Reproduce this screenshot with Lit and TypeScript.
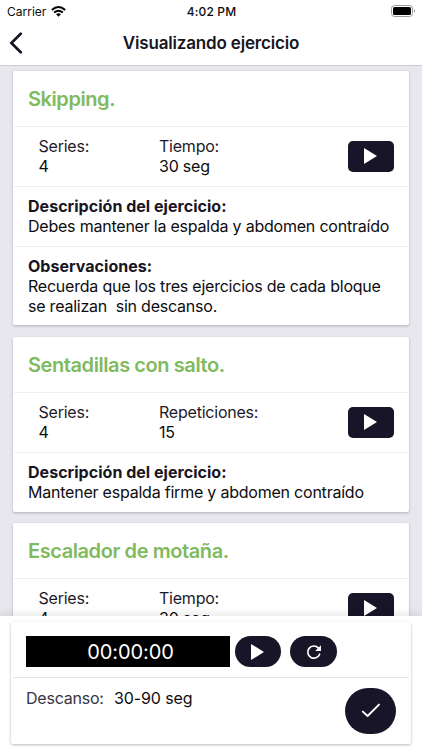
import { LitElement, html, css, nothing } from "lit";
import { customElement, property } from "lit/decorators.js";

interface Exercise {
  title: string;
  measure: string;
  amount: string;
  description: string;
  notes?: string[];
}

const exercises: Exercise[] = [
  {
    title: "Skipping.",
    measure: "Tiempo:",
    amount: "30 seg",
    description: "Debes mantener la espalda y abdomen contraído",
    notes: ["Recuerda que los tres ejercicios de cada bloque", "se realizan  sin descanso."],
  },
  {
    title: "Sentadillas con salto.",
    measure: "Repeticiones:",
    amount: "15",
    description: "Mantener espalda firme y abdomen contraído",
  },
  {
    title: "Escalador de motaña.",
    measure: "Tiempo:",
    amount: "30 seg",
    description: "Mantener espalda firme y abdomen contraído",
  },
];

const playIcon = html`<svg width="13" height="16" viewBox="0 0 13 16"><path d="M0 0 13 8 0 16Z" fill="#fff" /></svg>`;

@customElement("exercise-card")
export class ExerciseCard extends LitElement {
  @property({ attribute: false }) item!: Exercise;

  static styles = css`
    :host {
      display: block;
      background: #fff;
      border-radius: 2px;
      box-shadow: 0 1px 3px rgba(0, 0, 0, 0.24);
      color: #0d0d10;
    }
    .title {
      display: flex;
      align-items: center;
      height: 55px;
      padding: 1px 15px 0;
      box-sizing: border-box;
      font-size: 20px;
      font-weight: 600;
      letter-spacing: -0.42px;
      color: #7fba5f;
    }
    .row {
      border-top: 1px solid #efeff1;
      margin: 0 1px;
      box-sizing: border-box;
      line-height: 20px;
    }
    .stats {
      display: grid;
      grid-template-columns: 120.5px 1fr 46px;
      align-items: center;
      height: 60px;
      padding: 0 14px 1px 24.5px;
    }
    .label {
      color: #1d1b29;
    }
    .play {
      display: flex;
      align-items: center;
      height: 31px;
      border-radius: 5px;
      background: #191528;
      padding-left: 16px;
      box-sizing: border-box;
    }
    .text {
      padding: 9px 0 10px 14px;
      white-space: pre;
    }
    .notes {
      padding-bottom: 9px;
    }
    .heading {
      font-weight: 650;
      color: #171522;
      letter-spacing: 0.03px;
    }
  `;

  render() {
    const { title, measure, amount, description, notes } = this.item;
    return html`
      <div class="title">${title}</div>
      <div class="row stats">
        <div><div class="label">Series:</div><div>4</div></div>
        <div><div class="label">${measure}</div><div>${amount}</div></div>
        <div class="play">${playIcon}</div>
      </div>
      <div class="row text"><div class="heading">Descripción del ejercicio:</div><div>${description}</div></div>
      ${notes
        ? html`<div class="row text notes"><div class="heading">Observaciones:</div>${notes.map((n) => html`<div>${n}</div>`)}</div>`
        : nothing}
    `;
  }
}

@customElement("app-root")
export class AppRoot extends LitElement {
  static styles = css`
    :host {
      display: flex;
      flex-direction: column;
      height: 750px;
      overflow: hidden;
      background: #e8e7ee;
      font-family: Inter, "Liberation Sans", sans-serif;
      font-size: 16px;
      letter-spacing: -0.22px;
      color: #0d0d10;
    }
    .header {
      flex: none;
      height: 66px;
      box-sizing: border-box;
      background: #fff;
      border-bottom: 1px solid #cccbd2;
    }
    .status {
      display: grid;
      grid-template-columns: 1fr auto 1fr;
      align-items: center;
      height: 22px;
      padding: 0 6px 0 7px;
      font-size: 12px;
      letter-spacing: 0;
    }
    .carrier {
      display: flex;
      align-items: center;
      gap: 5px;
    }
    .clock {
      font-weight: 550;
      letter-spacing: 0.15px;
    }
    .battery {
      justify-self: end;
    }
    .nav {
      display: grid;
      grid-template-columns: 24px 1fr 24px;
      align-items: center;
      height: 42px;
      padding: 0 9px;
    }
    .heading {
      text-align: center;
      font-size: 17px;
      font-weight: 580;
      letter-spacing: -0.18px;
      color: #171522;
    }
    .list {
      flex: 1;
      min-height: 0;
      overflow: hidden;
      display: flex;
      flex-direction: column;
      gap: 11px;
      padding: 5px 13px 0;
    }
    exercise-card {
      flex: none;
    }
    exercise-card:first-child {
      margin-bottom: 1px;
    }
    .footer {
      position: relative;
      flex: none;
      height: 134px;
      box-sizing: border-box;
      padding: 6px 11px;
      background: #fff;
      box-shadow: 0 -1px 10px rgba(0, 0, 0, 0.12);
    }
    .panel {
      height: 122px;
      border-radius: 2px;
      box-shadow: 0 1px 3px rgba(0, 0, 0, 0.28);
    }
    .timer {
      display: flex;
      align-items: center;
      height: 55px;
      padding: 4px 15px 0;
      box-sizing: border-box;
    }
    .display {
      width: 204px;
      height: 31px;
      line-height: 32px;
      margin-right: 5px;
      padding-left: 5px;
      box-sizing: border-box;
      background: #000;
      color: #fff;
      text-align: center;
      font-size: 20px;
      font-weight: 380;
      letter-spacing: -0.1px;
    }
    .pill {
      display: flex;
      align-items: center;
      justify-content: center;
      width: 46px;
      height: 31px;
      border-radius: 16px;
      background: #191528;
      padding-right: 1px;
      box-sizing: border-box;
    }
    .reset {
      width: 47px;
      margin-left: 9px;
      padding: 1px 0 0;
    }
    .rest {
      display: flex;
      height: 67px;
      box-sizing: border-box;
      margin: 0 2px;
      border-top: 1px solid #e5e5e8;
      padding: 10px 13px 0;
      line-height: 20px;
    }
    .restlabel {
      width: 88px;
      color: #363442;
    }
    .restvalue {
      letter-spacing: -0.1px;
    }
    .done {
      display: flex;
      align-items: center;
      justify-content: center;
      width: 51px;
      height: 46px;
      border-radius: 23px;
      background: #191528;
      margin-left: auto;
      padding-bottom: 1px;
      box-sizing: border-box;
    }
  `;

  render() {
    return html`
      <div class="header">
        <div class="status">
          <div class="carrier">
            <span>Carrier</span>
            <svg width="15" height="11" viewBox="0 0 15 11" fill="none" stroke="#000" stroke-width="2">
              <path d="M.8 4.1Q7.5-2 14.2 4.1M3.2 6.6Q7.5 2.8 11.8 6.6" />
              <path d="M5.1 8.3Q7.5 6.2 9.9 8.3L7.5 10.8Z" fill="#000" stroke="none" />
            </svg>
          </div>
          <div class="clock">4:02 PM</div>
          <svg class="battery" width="25" height="12" viewBox="0 0 25 12">
            <rect x=".5" y=".5" width="21" height="11" rx="3" fill="#fff" stroke="#999" />
            <rect x="2" y="2" width="18" height="8" rx="1.6" />
            <path d="M23 4Q25 6 23 8Z" fill="#999" />
          </svg>
        </div>
        <div class="nav">
          <svg width="14" height="22" viewBox="0 0 14 22" fill="none" stroke="#171522" stroke-width="2.7" stroke-linecap="round">
            <path d="M11.7 1.8 2.4 11l9.3 9.2" />
          </svg>
          <div class="heading">Visualizando ejercicio</div>
        </div>
      </div>
      <div class="list">${exercises.map((e) => html`<exercise-card .item=${e}></exercise-card>`)}</div>
      <div class="footer">
        <div class="panel">
          <div class="timer">
            <div class="display">00:00:00</div>
            <div class="pill">${playIcon}</div>
            <div class="pill reset">
              <svg width="16" height="16" viewBox="0 0 16 16">
                <path d="M13.6 10.2A6.1 6.1 0 1 1 12.3 3.9" fill="none" stroke="#fff" stroke-width="1.7" stroke-linecap="round" />
                <path d="M15 1.2V6.9H9.2Z" fill="#fff" />
              </svg>
            </div>
          </div>
          <div class="rest">
            <span class="restlabel">Descanso:</span><span class="restvalue">30-90 seg</span>
            <div class="done">
              <svg width="20" height="15" viewBox="0 0 20 15" fill="none" stroke="#fff" stroke-width="1.9" stroke-linecap="round" stroke-linejoin="round">
                <path d="M1.8 8.6 6.6 13 18 1.6" />
              </svg>
            </div>
          </div>
        </div>
      </div>
    `;
  }
}
